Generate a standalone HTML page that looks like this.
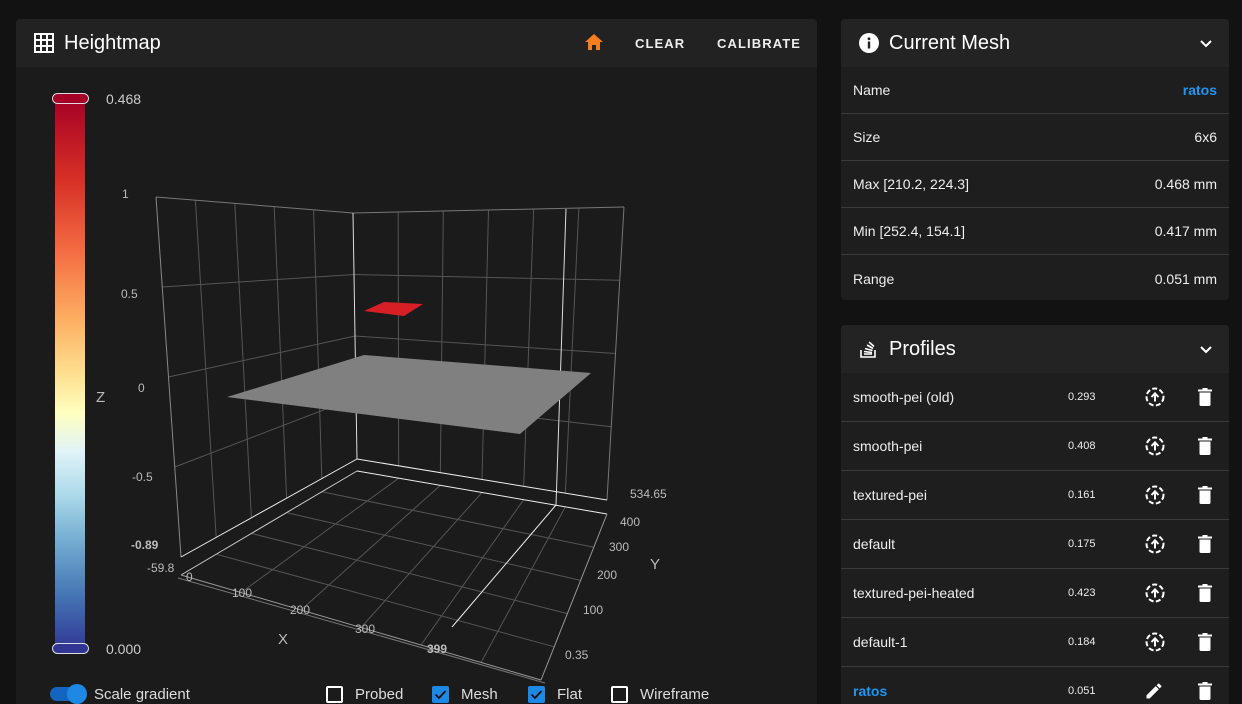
<!DOCTYPE html>
<html style="overflow:hidden;height:704px"><head><meta charset="utf-8">
<style>
*{box-sizing:border-box;margin:0;padding:0}
body{width:1242px;height:704px;overflow:hidden;background:#121212;font-family:"Liberation Sans",sans-serif;color:#fff;position:relative}
.card{position:absolute;background:#1e1e1e;border-radius:4px;overflow:hidden}
.hdr{height:48px;background:#232323;display:flex;align-items:center;padding:0 16px;font-size:20px}
.row{height:47px;display:flex;align-items:center;padding:0 12px;font-size:14px;border-bottom:1px solid #3a3a3a;color:#eee}
.row .r{margin-left:auto}
.btn{position:absolute;top:36px;font-size:13px;font-weight:bold;letter-spacing:1.1px;color:#eee}
.lbl{position:absolute;font-size:12px;color:#bbb}
.cb{position:absolute;top:686px;width:17px;height:17px;border:2px solid #fff;border-radius:2px}
.cb.on{background:#1e88e5;border-color:#1e88e5}
.ct{position:absolute;top:686px;font-size:15px;color:#ddd}
</style></head><body>
<div class="card" style="left:16px;top:19px;width:801px;height:685px;background:#1b1b1b;border-radius:4px 4px 0 0">
 <div class="hdr" style="background:#222">
  <svg width="20" height="20" viewBox="0 0 20 20" style="margin-right:10px;margin-left:2px"><rect x="1" y="1" width="18" height="18" fill="none" stroke="#fff" stroke-width="2"/><path d="M7 1V19M13 1V19M1 7H19M1 13H19" stroke="#fff" stroke-width="2"/></svg>
  Heightmap
 </div>
</div>
<svg style="position:absolute;left:584px;top:33px" width="20" height="18" viewBox="0 0 20 18"><path d="M10 1L1 9H4V17H8V12H12V17H16V9H19Z" fill="#f57c1f"/></svg>
<div class="btn" style="left:635px">CLEAR</div>
<div class="btn" style="left:717px">CALIBRATE</div>

<div style="position:absolute;left:55px;top:97px;width:30px;height:554px;background:linear-gradient(#a50026,#d73027 15%,#f46d43 28%,#fdae61 40%,#fee090 50%,#ffffbf 57%,#e0f3f8 64%,#abd9e9 72%,#74add1 80%,#4575b4 90%,#313695)"></div>
<div style="position:absolute;left:52px;top:93px;width:37px;height:11px;border-radius:6px;background:#a50026;border:1px solid #ddd"></div>
<div style="position:absolute;left:52px;top:643px;width:37px;height:11px;border-radius:6px;background:#313695;border:1px solid #ddd"></div>
<div style="position:absolute;left:106px;top:91px;font-size:14px;color:#ccc">0.468</div>
<div style="position:absolute;left:106px;top:641px;font-size:14px;color:#ccc">0.000</div>

<svg id="ch" style="position:absolute;left:0;top:0" width="817" height="704"></svg>
<div class="lbl" style="left:122px;top:187px">1</div>
<div class="lbl" style="left:121px;top:287px">0.5</div>
<div class="lbl" style="left:138px;top:381px">0</div>
<div class="lbl" style="left:132px;top:470px">-0.5</div>
<div class="lbl" style="left:131px;top:538px;font-weight:bold">-0.89</div>
<div class="lbl" style="left:147px;top:561px">-59.8</div>
<div class="lbl" style="left:96px;top:389px;font-size:15px">Z</div>
<div class="lbl" style="left:186px;top:570px">0</div>
<div class="lbl" style="left:232px;top:586px">100</div>
<div class="lbl" style="left:290px;top:603px">200</div>
<div class="lbl" style="left:355px;top:622px">300</div>
<div class="lbl" style="left:427px;top:642px;font-weight:bold">399</div>
<div class="lbl" style="left:278px;top:631px;font-size:15px">X</div>
<div class="lbl" style="left:630px;top:487px">534.65</div>
<div class="lbl" style="left:620px;top:515px">400</div>
<div class="lbl" style="left:609px;top:540px">300</div>
<div class="lbl" style="left:597px;top:568px">200</div>
<div class="lbl" style="left:583px;top:603px">100</div>
<div class="lbl" style="left:565px;top:648px">0.35</div>
<div class="lbl" style="left:650px;top:556px;font-size:15px">Y</div>

<div style="position:absolute;left:50px;top:687px;width:36px;height:14px;border-radius:7px;background:#1565c0"></div>
<div style="position:absolute;left:67px;top:684px;width:20px;height:20px;border-radius:50%;background:#1e88e5"></div>
<div class="ct" style="left:94px">Scale gradient</div>
<div class="cb" style="left:326px"></div><div class="ct" style="left:355px">Probed</div>
<div class="cb on" style="left:432px"><svg width="13" height="13" viewBox="0 0 13 13" style="position:absolute;left:0;top:0"><path d="M1.5 6.5L5 10L11.5 3" stroke="#111" stroke-width="1.8" fill="none"/></svg></div><div class="ct" style="left:461px">Mesh</div>
<div class="cb on" style="left:528px"><svg width="13" height="13" viewBox="0 0 13 13" style="position:absolute;left:0;top:0"><path d="M1.5 6.5L5 10L11.5 3" stroke="#111" stroke-width="1.8" fill="none"/></svg></div><div class="ct" style="left:557px">Flat</div>
<div class="cb" style="left:611px"></div><div class="ct" style="left:640px">Wireframe</div>

<div class="card" style="left:841px;top:19px;width:388px;height:281px">
 <div class="hdr"><svg width="20" height="20" viewBox="0 0 20 20" style="margin-right:10px;margin-left:2px"><circle cx="10" cy="10" r="10" fill="#fff"/><rect x="8.8" y="8.5" width="2.4" height="7" fill="#222"/><circle cx="10" cy="5.8" r="1.4" fill="#222"/></svg>Current Mesh<svg style="margin-left:auto;margin-right:0" width="14" height="10" viewBox="0 0 14 10"><path d="M2 3L7 8L12 3" stroke="#fff" stroke-width="2" fill="none"/></svg></div>
 <div class="row">Name<span class="r" style="color:#2196f3;font-weight:bold">ratos</span></div>
 <div class="row">Size<span class="r">6x6</span></div>
 <div class="row">Max [210.2, 224.3]<span class="r">0.468 mm</span></div>
 <div class="row">Min [252.4, 154.1]<span class="r">0.417 mm</span></div>
 <div class="row" style="border:0">Range<span class="r">0.051 mm</span></div>
</div>

<div class="card" style="left:841px;top:325px;width:388px;height:379px;border-radius:4px 4px 0 0">
 <div class="hdr"><svg width="20" height="20" viewBox="0 0 20 20" style="margin-right:10px;margin-left:2px"><path d="M2 11V18H16V11M5 15H13M5 12.5L13 13.5M6 9.5L13.5 11.5M8 6L14 9.5M10 3L15 7.5" stroke="#fff" stroke-width="1.6" fill="none"/></svg>Profiles<svg style="margin-left:auto" width="14" height="10" viewBox="0 0 14 10"><path d="M2 3L7 8L12 3" stroke="#fff" stroke-width="2" fill="none"/></svg></div>
 <div id="prof"></div>
</div>

<script>
const ns="http://www.w3.org/2000/svg",s=document.getElementById('ch');
function L(a,b,c,w){const l=document.createElementNS(ns,'line');l.setAttribute('x1',a[0]);l.setAttribute('y1',a[1]);l.setAttribute('x2',b[0]);l.setAttribute('y2',b[1]);l.setAttribute('stroke',c||'#555');l.setAttribute('stroke-width',w||1);s.appendChild(l);}
function P(pts,f){const p=document.createElementNS(ns,'polygon');p.setAttribute('points',pts.map(q=>q.join(',')).join(' '));p.setAttribute('fill',f);s.appendChild(p);}
function m(a,b,t){return[a[0]+(b[0]-a[0])*t,a[1]+(b[1]-a[1])*t];}
function grid(TL,TR,BR,BL,nu,nv){for(let i=1;i<nu;i++){const t=i/nu;L(m(TL,TR,t),m(BL,BR,t));}for(let j=1;j<nv;j++){const t=j/nv;L(m(TL,BL,t),m(TR,BR,t));}}
let lw=[[156,197],[353,213],[357,459],[181,557]];
grid(lw[0],lw[1],lw[2],lw[3],5,4);
L(lw[0],lw[1],'#777');L(lw[0],lw[3],'#888');
let rw=[[353,213],[624,207],[607,500],[357,459]];
grid(rw[0],rw[1],rw[2],rw[3],6,4);
L(rw[0],rw[1],'#777');L(rw[1],rw[2],'#777');
L([566,209],[556,505],'#ddd');L([353,213],[357,459],'#ddd');
let fl=[[357,471],[607,514],[541,680],[181,575]];
grid(fl[0],fl[1],fl[2],fl[3],6,5);
L(lw[3],lw[2],'#eee');L(rw[3],rw[2],'#eee');L(fl[0],fl[1],'#eee');L(fl[0],fl[3],'#ccc');
L([181,575],[541,680],'#999');L([178,578],[545,683],'#777');L([607,514],[541,680],'#999');
L([556,505],[452,627],'#eee');
P([[227,397],[364,355],[591,373],[520,434]],'#808080');
P([[364,311],[384,302],[423,304],[404,316]],'#d81f26');
const pr=[['smooth-pei (old)','0.293'],['smooth-pei','0.408'],['textured-pei','0.161'],['default','0.175'],['textured-pei-heated','0.423'],['default-1','0.184'],['ratos','0.051']];
let h='';
pr.forEach((p,i)=>{const last=i==6;
const ic=last?'<svg width="20" height="20" viewBox="0 0 24 24"><path d="M3 17.25V21h3.75L17.8 9.94l-3.75-3.75L3 17.25zM20.7 7.04a1 1 0 000-1.41l-2.34-2.34a1 1 0 00-1.41 0l-1.83 1.83 3.75 3.75 1.83-1.83z" fill="#fff"/></svg>':'<svg width="22" height="22" viewBox="0 0 22 22"><circle cx="11" cy="11" r="8.5" fill="none" stroke="#fff" stroke-width="2" stroke-dasharray="5 2.4"/><path d="M11 15.5V8M7.5 11L11 7.3L14.5 11" stroke="#fff" stroke-width="2" fill="none"/></svg>';
h+='<div class="row" style="height:49px">'+(last?'<span style="color:#2196f3;font-weight:bold">'+p[0]+'</span>':p[0])+'<span style="position:absolute;left:227px;font-size:11px">'+p[1]+'</span><span style="position:absolute;left:303px;display:flex">'+ic+'</span><span style="position:absolute;left:356px;display:flex"><svg width="16" height="18" viewBox="0 0 16 18"><rect x="1" y="1.5" width="14" height="2" fill="#fff"/><rect x="5.5" y="0" width="5" height="2" fill="#fff"/><path d="M2.5 4.5H13.5V16.5Q13.5 18 12 18H4Q2.5 18 2.5 16.5Z" fill="#fff"/></svg></span></div>';});
document.getElementById('prof').innerHTML=h;
</script>
</body></html>
